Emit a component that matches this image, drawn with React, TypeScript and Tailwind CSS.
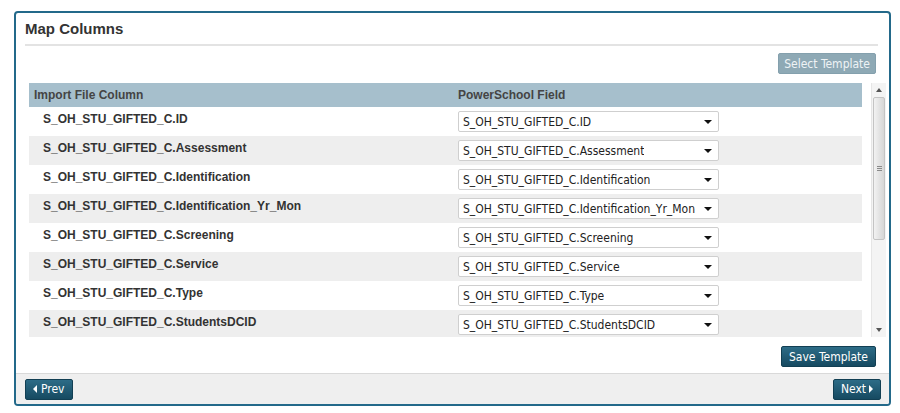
import React from "react";

const fields = [
  "S_OH_STU_GIFTED_C.ID",
  "S_OH_STU_GIFTED_C.Assessment",
  "S_OH_STU_GIFTED_C.Identification",
  "S_OH_STU_GIFTED_C.Identification_Yr_Mon",
  "S_OH_STU_GIFTED_C.Screening",
  "S_OH_STU_GIFTED_C.Service",
  "S_OH_STU_GIFTED_C.Type",
  "S_OH_STU_GIFTED_C.StudentsDCID",
];

const Caret = ({ dir }: { dir: "left" | "right" | "down" }) => {
  const pts = {
    left: "4,0 4,8 0,4",
    right: "0,0 0,8 4,4",
    down: "0,0 8,0 4,4",
  }[dir];
  const w = dir === "down" ? 8 : 4;
  const h = dir === "down" ? 4 : 8;
  return (
    <svg width={w} height={h} viewBox={`0 0 ${w} ${h}`} className="shrink-0">
      <polygon points={pts} fill="currentColor" />
    </svg>
  );
};

const btnDark =
  "h-[21px] px-[7px] flex items-center rounded-[2px] bg-gradient-to-b from-[#2d6c87] to-[#164a61] border border-[#123f53] text-white text-[12px] font-['DejaVu_Sans_Condensed','DejaVu_Sans',sans-serif] leading-none";

const App = () => {
  return (
    <div className="w-[900px] h-[413px] bg-white pt-[11px] pl-[14px]">
      <div className="w-[877px] h-[395px] border-2 border-[#23698a] rounded-[4px] flex flex-col overflow-hidden font-['Liberation_Sans',Arial,sans-serif]">
        {/* Header */}
        <div className="px-[9px] pt-[6px]">
          <h2 className="text-[15px] leading-[20px] font-bold text-[#333]">Map Columns</h2>
          <div className="mt-[5px] mr-[2px] h-[2px] bg-[#e3e3e3]" />
        </div>

        <div className="flex-1 pl-[13px] pr-[3px]">
          <div className="flex justify-end pt-[7px] pr-[10px]">
            <button className="h-[21px] px-[5px] rounded-[2px] bg-[#8ea9b5] border border-[#84a0ad] text-[#eef3f5] text-[12px] font-['DejaVu_Sans_Condensed','DejaVu_Sans',sans-serif] leading-none">
              Select Template
            </button>
          </div>

          <div className="mt-[9px] flex gap-[9px]">
            <div className="w-[833px] h-[254px] overflow-hidden">
              <div className="flex h-[24px] items-center bg-[#a6bfcc] text-[12px] font-bold text-[#444]">
                <div className="w-[424px] pl-[5px]">Import File Column</div>
                <div className="pl-[5px]">PowerSchool Field</div>
              </div>
              {fields.map((f, i) => (
                <div
                  key={f}
                  className={`flex h-[29px] ${i % 2 === 1 ? "bg-[#eeeeee]" : "bg-white"}`}
                >
                  <div className="w-[424px] pl-[14px] pt-[5px] text-[12px] leading-[14px] font-bold text-[#333]">
                    {f}
                  </div>
                  <div className="pl-[5px] pt-[4px]">
                    <div className="w-[261px] h-[21px] bg-white border border-[#cfcfcf] rounded-[2px] flex items-center justify-between pl-[4px] pr-[6px] text-[12px] text-[#222] font-['DejaVu_Sans_Condensed','DejaVu_Sans',sans-serif]">
                      <span className="whitespace-nowrap overflow-hidden">{f}</span>
                      <span className="text-[#111] ml-[2px]">
                        <Caret dir="down" />
                      </span>
                    </div>
                  </div>
                </div>
              ))}
            </div>

            {/* scrollbar */}
            <div className="w-[15px] h-[254px] bg-[#f4f4f4] border-l border-[#e6e6e6] flex flex-col items-center">
              <div className="h-[14px] flex items-center justify-center text-[#555]">
                <svg width="6" height="4" viewBox="0 0 6 4"><polygon points="0,4 6,4 3,0" fill="currentColor" /></svg>
              </div>
              <div className="w-[12px] h-[143px] rounded-[2px] border border-[#c4c4c4] bg-gradient-to-r from-[#f2f2f2] via-[#e4e4e4] to-[#d6d6d6] flex flex-col items-center justify-center gap-[1px]">
                <div className="w-[5px] h-[1px] bg-[#8a8a8a]" />
                <div className="w-[5px] h-[1px] bg-[#8a8a8a]" />
                <div className="w-[5px] h-[1px] bg-[#8a8a8a]" />
              </div>
              <div className="flex-1" />
              <div className="h-[14px] flex items-center justify-center text-[#555]">
                <svg width="6" height="4" viewBox="0 0 6 4"><polygon points="0,0 6,0 3,4" fill="currentColor" /></svg>
              </div>
            </div>
          </div>

          <div className="flex justify-end pt-[9px] pr-[10px]">
            <button className={`${btnDark} px-[6px]`}>Save Template</button>
          </div>
        </div>

        {/* Footer */}
        <div className="h-[31px] bg-[#efefef] border-t border-[#d9d9d9] flex items-center justify-between pl-[9px] pr-[8px]">
          <button className={`${btnDark} gap-[4px]`}>
            <Caret dir="left" />
            Prev
          </button>
          <button className={`${btnDark} gap-[3px]`}>
            Next
            <Caret dir="right" />
          </button>
        </div>
      </div>
    </div>
  );
};

export default App;
